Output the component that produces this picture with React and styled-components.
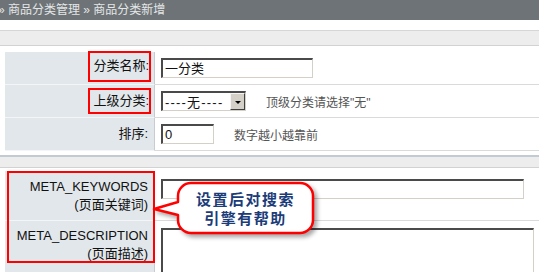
import React from 'react';
import styled, { createGlobalStyle } from 'styled-components';

const GlobalStyle = createGlobalStyle`
  html, body {
    margin: 0;
    padding: 0;
    background: #fff;
  }
  body {
    font-family: "Liberation Sans", "Noto Sans CJK SC", sans-serif;
    font-size: 13px;
    color: #111;
  }
`;

const Page = styled.div`
  position: relative;
  width: 539px;
  height: 272px;
  overflow: hidden;
`;

const Crumb = styled.div`
  height: 20px;
  background: #6d7376;
  color: #e4e6e7;
  font-size: 12px;
  line-height: 20px;
  white-space: nowrap;
  text-indent: -2px;
`;

const Band = styled.div`
  height: ${(p) => p.$fill}px;
  background: #ededed;
  border-top: ${(p) => (p.$blue ? '2px solid #c2cbd3' : '1px solid #d6d6d6')};
  border-bottom: 1px solid #d2d2d2;
  margin-top: ${(p) => p.$top}px;
  margin-bottom: ${(p) => p.$bottom}px;
`;

const FormTable = styled.div`
  position: relative;
  margin-left: 5px;
  display: flex;
  flex-direction: column;
`;

const Row = styled.div`
  display: grid;
  grid-template-columns: 150px 1fr;
  height: ${(p) => p.$height}px;
`;

const LabelCell = styled.div`
  display: flex;
  flex-direction: column;
  align-items: flex-end;
  justify-content: ${(p) => (p.$top ? 'flex-start' : 'center')};
  padding-top: ${(p) => p.$top || 0}px;
  padding-right: 6px;
  background: #e2e7eb;
  border-right: 1px solid #c6ccd1;
  border-bottom: 1px solid #f3f5f6;
  font-size: 13px;
  line-height: 18px;
  text-align: right;
  white-space: nowrap;
`;

const ValueCell = styled.div`
  display: flex;
  align-items: ${(p) => (p.$top ? 'flex-start' : 'center')};
  padding-left: 6px;
  padding-top: ${(p) => p.$top || 0}px;
  border-bottom: 1px solid #dadada;
  gap: 20px;
`;

const Mark = styled.span`
  display: inline-block;
  border: 2px solid #ff0000;
  padding: ${(p) => (p.$tall ? '4px 0 5px 3px' : '2px 0 2px 3px')};
  margin-right: -3px;
  margin-top: ${(p) => (p.$tall ? '-4px' : '0')};
  line-height: 18px;
`;

const TextInput = styled.div`
  box-sizing: border-box;
  width: ${(p) => p.$width}px;
  height: ${(p) => p.$height || 20}px;
  border-top: 2px solid #4a4a4a;
  border-left: 2px solid #4a4a4a;
  border-right: 1px solid #d4d0c8;
  border-bottom: 1px solid #d4d0c8;
  background: #fff;
  padding-left: 2px;
  font-size: 13px;
  line-height: 17px;
  white-space: nowrap;
`;

const Select = styled.div`
  box-sizing: border-box;
  width: 85px;
  height: 20px;
  display: flex;
  align-items: center;
  justify-content: space-between;
  border-top: 2px solid #4a4a4a;
  border-left: 2px solid #4a4a4a;
  border-right: 1px solid #d4d0c8;
  border-bottom: 1px solid #d4d0c8;
  background: #fff;
  padding-left: 2px;
  font-size: 13px;
  letter-spacing: 1.2px;
  white-space: nowrap;
`;

const SelectButton = styled.div`
  box-sizing: border-box;
  width: 15px;
  height: 17px;
  flex-shrink: 0;
  background: #d4d0c8;
  border-top: 1px solid #f4f4f4;
  border-left: 1px solid #f4f4f4;
  border-right: 1px solid #404040;
  border-bottom: 1px solid #404040;
  display: flex;
  align-items: center;
  justify-content: center;

  &::after {
    content: '';
    border-left: 3px solid transparent;
    border-right: 3px solid transparent;
    border-top: 3px solid #000;
    margin-top: 1px;
  }
`;

const Hint = styled.span`
  color: #555;
  font-size: 12px;
  white-space: nowrap;
`;

const AnnotationFrame = styled.div`
  position: absolute;
  left: 2px;
  top: 0;
  width: 148px;
  height: 92px;
  box-sizing: border-box;
  border: 2px solid #ff0000;
  pointer-events: none;
`;

const Callout = styled.div`
  position: absolute;
  left: 148px;
  top: 178px;
  width: 175px;
  height: 64px;
`;

const CalloutShape = styled.svg`
  position: absolute;
  inset: 0;
  filter: drop-shadow(3px 3px 2px rgba(0, 0, 0, 0.35));
`;

const CalloutText = styled.div`
  position: absolute;
  left: 30px;
  top: 5px;
  width: 135px;
  height: 50px;
  display: flex;
  flex-direction: column;
  align-items: center;
  justify-content: center;
  color: #1b3c78;
  font-family: "Noto Sans CJK SC", sans-serif;
  font-weight: bold;
  font-size: 15px;
  line-height: 19px;
  letter-spacing: 1.5px;
`;

const bubblePath =
  'M43 5 H152 A13 13 0 0 1 165 18 V42 A13 13 0 0 1 152 55 H43 A13 13 0 0 1 30 42 V37 L6 31 L30 24 V18 A13 13 0 0 1 43 5 Z';

const App = () => (
  <Page>
    <GlobalStyle />
    <Crumb>» 商品分类管理 » 商品分类新增</Crumb>
    <Band $fill={14} $top={10} $bottom={6} />
    <FormTable>
      <Row $height={33}>
        <LabelCell>
          <Mark $tall>分类名称:</Mark>
        </LabelCell>
        <ValueCell>
          <TextInput $width={152}>一分类</TextInput>
        </ValueCell>
      </Row>
      <Row $height={33}>
        <LabelCell>
          <Mark>上级分类:</Mark>
        </LabelCell>
        <ValueCell>
          <Select>
            <span>----无----</span>
            <SelectButton />
          </Select>
          <Hint>顶级分类请选择"无"</Hint>
        </ValueCell>
      </Row>
      <Row $height={33}>
        <LabelCell>排序:</LabelCell>
        <ValueCell>
          <TextInput $width={53}>0</TextInput>
          <Hint>数字越小越靠前</Hint>
        </ValueCell>
      </Row>
    </FormTable>
    <Band $blue $fill={10} $top={4} $bottom={3} />
    <FormTable>
      <Row $height={50}>
        <LabelCell>
          <span>META_KEYWORDS</span>
          <span>(页面关键词)</span>
        </LabelCell>
        <ValueCell $top={8}>
          <TextInput $width={363} />
        </ValueCell>
      </Row>
      <Row $height={52}>
        <LabelCell $top={6}>
          <span>META_DESCRIPTION</span>
          <span>(页面描述)</span>
        </LabelCell>
        <ValueCell $top={7}>
          <TextInput $width={373} $height={60} />
        </ValueCell>
      </Row>
      <AnnotationFrame />
    </FormTable>
    <Callout>
      <CalloutShape width="175" height="64" viewBox="0 0 175 64">
        <path d={bubblePath} fill="#fff" stroke="#ff0000" strokeWidth="2.5" strokeLinejoin="round" />
      </CalloutShape>
      <CalloutText>
        <span>设置后对搜索</span>
        <span>引擎有帮助</span>
      </CalloutText>
    </Callout>
  </Page>
);

export default App;
